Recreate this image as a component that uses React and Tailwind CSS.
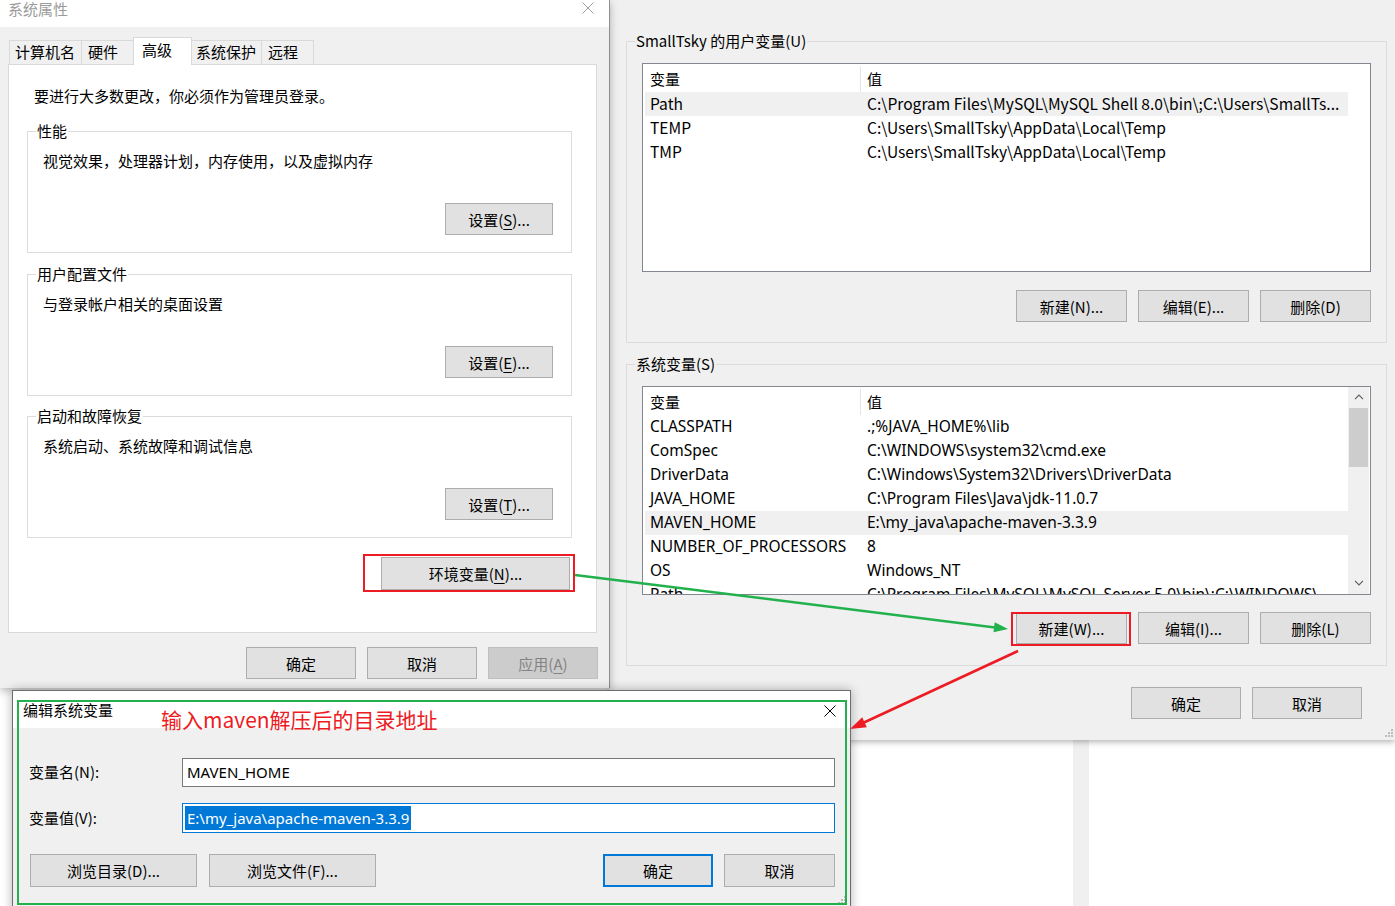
import React from 'react';

const ui = "font-['Noto_Sans_CJK_SC',sans-serif]";
const seg = "font-['Noto_Sans','Noto_Sans_CJK_SC',sans-serif]";

function Key({ children }) {
    return <span className="underline decoration-1 underline-offset-[3px]">{children}</span>;
}

function CloseX({ size = 12, color = '#000', className = '' }) {
    return (
        <svg width={size} height={size} viewBox="0 0 12 12" className={className}>
            <path d="M0.5 0.5L11.5 11.5M11.5 0.5L0.5 11.5" stroke={color} strokeWidth="1" fill="none" />
        </svg>
    );
}

function Chevron({ down = false }) {
    return (
        <svg width="10" height="6" viewBox="0 0 10 6">
            <path d={down ? 'M1 0.8L5 4.8L9 0.8' : 'M1 5.2L5 1.2L9 5.2'} stroke="#606060" strokeWidth="1.2" fill="none" />
        </svg>
    );
}

function Grip({ className = '' }) {
    // resize grip dots in the corner
    const dots = [[6, 0], [3, 3], [6, 3], [0, 6], [3, 6], [6, 6]];
    return (
        <svg width="8" height="8" viewBox="0 0 8 8" className={className}>
            {dots.map(([x, y]) => (
                <rect key={`${x}-${y}`} x={x} y={y} width="2" height="2" fill="#bcbcbc" />
            ))}
        </svg>
    );
}

function Btn({ children, className = '', variant = 'normal' }) {
    const tone =
        variant === 'primary'
            ? 'border-2 border-[#0078d7] bg-[#e1e1e1] text-black'
            : variant === 'disabled'
                ? 'border border-[#bfbfbf] bg-[#cccccc] text-[#838383]'
                : 'border border-[#adadad] bg-[#e1e1e1] text-black';
    return (
        <button type="button" className={`flex shrink-0 items-center justify-center text-[15px] leading-none ${tone} ${className}`}>
            {children}
        </button>
    );
}

function Group({ title, bg = 'bg-white', className = '', children }) {
    return (
        <div className={`flex shrink-0 flex-col border border-[#dcdcdc] ${className}`}>
            <div className={`-mt-[11px] ml-[8px] w-fit px-px leading-[20px] ${bg}`}>{title}</div>
            {children}
        </div>
    );
}

function Scrollbar() {
    return (
        <div className="flex w-[21px] flex-col bg-[#f0f0f0]">
            <div className="flex h-[20px] items-center justify-center">
                <Chevron />
            </div>
            <div className="mx-px mt-px h-[59px] bg-[#cdcdcd]" />
            <div className="flex-1" />
            <div className="flex h-[20px] items-center justify-center pb-[2px]">
                <Chevron down />
            </div>
        </div>
    );
}

function VarList({ rows, selected, scroll = false, rowFont, className = '' }) {
    return (
        <div className={`flex h-[209px] w-[729px] shrink-0 border border-[#828790] bg-white ${className}`}>
            <div className="flex w-[705px] flex-col overflow-hidden pl-[2px] pt-[2px]">
                <div className="flex h-[26px] shrink-0">
                    <div className="flex w-[216px] shrink-0 items-center border-r border-[#e5e5e5] pl-[5px]">变量</div>
                    <div className="flex items-center pl-[6px]">值</div>
                </div>
                {rows.map(([name, value]) => (
                    <div
                        key={name + value}
                        className={`flex h-[24px] shrink-0 items-center whitespace-nowrap ${rowFont} ${name === selected ? 'bg-[#f0f0f0]' : ''}`}
                    >
                        <div className="w-[216px] shrink-0 pl-[5px]">{name}</div>
                        <div className="shrink-0 pl-[6px]">{value}</div>
                    </div>
                ))}
            </div>
            {scroll && <Scrollbar />}
        </div>
    );
}

const userVars = [
    ['Path', 'C:\\Program Files\\MySQL\\MySQL Shell 8.0\\bin\\;C:\\Users\\SmallTs...'],
    ['TEMP', 'C:\\Users\\SmallTsky\\AppData\\Local\\Temp'],
    ['TMP', 'C:\\Users\\SmallTsky\\AppData\\Local\\Temp'],
];

const systemVars = [
    ['CLASSPATH', '.;%JAVA_HOME%\\lib'],
    ['ComSpec', 'C:\\WINDOWS\\system32\\cmd.exe'],
    ['DriverData', 'C:\\Windows\\System32\\Drivers\\DriverData'],
    ['JAVA_HOME', 'C:\\Program Files\\Java\\jdk-11.0.7'],
    ['MAVEN_HOME', 'E:\\my_java\\apache-maven-3.3.9'],
    ['NUMBER_OF_PROCESSORS', '8'],
    ['OS', 'Windows_NT'],
    ['Path', 'C:\\Program Files\\MySQL\\MySQL Server 5.0\\bin\\;C:\\WINDOWS\\'],
];

const tabs = [
    { label: '计算机名', w: 'w-[73px]', pl: 'pl-[5px]' },
    { label: '硬件', w: 'w-[53px]', pl: 'pl-[6px]' },
    { label: '高级', w: 'w-[59px]', pl: 'pl-[8px]', active: true },
    { label: '系统保护', w: 'w-[71px]', pl: 'pl-[4px]' },
    { label: '远程', w: 'w-[53px]', pl: 'pl-[6px]' },
];

function SystemProperties() {
    const sections = [
        { title: '性能', text: '视觉效果，处理器计划，内存使用，以及虚拟内存', key: 'S', mt: 'mt-[25px]' },
        { title: '用户配置文件', text: '与登录帐户相关的桌面设置', key: 'E', mt: 'mt-[21px]' },
        { title: '启动和故障恢复', text: '系统启动、系统故障和调试信息', key: 'T', mt: 'mt-[20px]' },
    ];

    return (
        <div className={`absolute left-0 top-0 z-10 flex h-[688px] w-[610px] flex-col border-r border-[#8f8f8f] bg-[#f0f0f0] text-[15px] text-black shadow-[0_3px_8px_rgba(0,0,0,0.28)] ${ui}`}>
            {/* Title bar */}
            <div className="flex h-[27px] shrink-0 justify-between bg-white pl-[8px] pr-[15px]">
                <span className="leading-[17px] text-[#9b9b9b]">系统属性</span>
                <CloseX size={12} color="#9b9b9b" className="mt-[2px]" />
            </div>

            <div className="flex flex-col px-[8px] pt-[10px]">
                {/* Tabs */}
                <div className="flex h-[27px] shrink-0 items-end pl-px">
                    {tabs.map(t =>
                        t.active ? (
                            <div
                                key={t.label}
                                className={`relative z-10 -mb-px -mr-px flex h-[28px] items-center border border-b-0 border-[#d9d9d9] bg-white pb-[3px] ${t.w} ${t.pl}`}
                            >
                                {t.label}
                            </div>
                        ) : (
                            <div
                                key={t.label}
                                className={`-mr-px flex h-[24px] items-center border border-b-0 border-[#d9d9d9] bg-[#f0f0f0] ${t.w} ${t.pl}`}
                            >
                                {t.label}
                            </div>
                        )
                    )}
                </div>

                {/* Tab panel */}
                <div className="flex h-[569px] w-[589px] shrink-0 flex-col border border-[#d9d9d9] bg-white pt-[21px]">
                    <div className="ml-[25px] leading-[20px]">要进行大多数更改，你必须作为管理员登录。</div>

                    {sections.map(s => (
                        <Group key={s.title} title={s.title} className={`ml-[18px] h-[122px] w-[545px] ${s.mt}`}>
                            <div className="mt-[10px] pl-[15px] leading-[20px]">{s.text}</div>
                            <Btn className="mb-[17px] mr-[18px] mt-auto h-[32px] w-[108px] self-end">
                                设置(<Key>{s.key}</Key>)...
                            </Btn>
                        </Group>
                    ))}

                    <Btn className="mr-[26px] mt-[19px] h-[33px] w-[189px] self-end">
                        环境变量(<Key>N</Key>)...
                    </Btn>
                </div>

                {/* Dialog buttons */}
                <div className="mt-[14px] flex gap-[11px] pl-[238px]">
                    <Btn className="h-[32px] w-[110px]">确定</Btn>
                    <Btn className="h-[32px] w-[110px]">取消</Btn>
                    <Btn variant="disabled" className="h-[32px] w-[110px]">
                        应用(<Key>A</Key>)
                    </Btn>
                </div>
            </div>
        </div>
    );
}

function EnvironmentVariables() {
    return (
        <div className={`absolute left-[609px] top-0 flex h-[740px] w-[786px] flex-col bg-[#f0f0f0] pl-[17px] pt-[41px] text-[15px] text-black shadow-[0_2px_6px_rgba(0,0,0,0.3)] ${ui}`}>
            <Group title="SmallTsky 的用户变量(U)" bg="bg-[#f0f0f0]" className="h-[302px] w-[761px]">
                <VarList className="ml-[15px] mt-[12px]" rows={userVars} selected="Path" rowFont="text-[15.6px]" />
                <div className="mr-[15px] mt-[18px] flex justify-end gap-[11px]">
                    <Btn className="h-[32px] w-[111px]">新建(N)...</Btn>
                    <Btn className="h-[32px] w-[111px]">编辑(E)...</Btn>
                    <Btn className="h-[32px] w-[111px]">删除(D)</Btn>
                </div>
            </Group>

            <Group title="系统变量(S)" bg="bg-[#f0f0f0]" className="mt-[21px] h-[302px] w-[761px]">
                <VarList
                    className="ml-[15px] mt-[12px]"
                    rows={systemVars}
                    selected="MAVEN_HOME"
                    scroll
                    rowFont={`text-[15.5px] ${seg}`}
                />
                <div className="mr-[15px] mt-[17px] flex justify-end gap-[11px]">
                    <Btn className="h-[32px] w-[111px]">新建(W)...</Btn>
                    <Btn className="h-[32px] w-[111px]">编辑(I)...</Btn>
                    <Btn className="h-[32px] w-[111px]">删除(L)</Btn>
                </div>
            </Group>

            <div className="mr-[33px] mt-[21px] flex gap-[11px] self-end">
                <Btn className="h-[32px] w-[110px]">确定</Btn>
                <Btn className="h-[32px] w-[110px]">取消</Btn>
            </div>

            <Grip className="absolute bottom-[3px] right-[2px]" />
        </div>
    );
}

function EditVariableDialog() {
    return (
        <div className={`absolute left-[12px] top-[690px] z-20 flex h-[230px] w-[839px] flex-col border border-[#6d6d6d] bg-[#f0f0f0] text-[15px] text-black shadow-[0_0_10px_rgba(0,0,0,0.3)] ${ui}`}>
            <div className="flex h-[37px] shrink-0 items-start justify-between bg-white pl-[10px] pr-[14px] pt-[9px]">
                <span className="leading-[20px]">编辑系统变量</span>
                <CloseX size={12} className="mt-[5px]" />
            </div>

            <div className="flex flex-col pl-[16px] pr-[14px] pt-[30px]">
                <div className="flex items-center">
                    <span className="w-[153px]">变量名(N):</span>
                    <div className={`flex h-[29px] w-[653px] items-center border border-[#7a7a7a] bg-white pl-[4px] ${seg}`}>
                        MAVEN_HOME
                    </div>
                </div>
                <div className="mt-[16px] flex items-center">
                    <span className="w-[153px]">变量值(V):</span>
                    <div className={`flex h-[30px] w-[653px] items-center border border-[#0078d7] bg-white pl-[2px] ${seg}`}>
                        <span className="bg-[#0078d7] px-[2px] leading-[24px] text-white">E:\my_java\apache-maven-3.3.9</span>
                    </div>
                </div>

                <div className="mt-[21px] flex gap-[12px] pl-px pr-px">
                    <Btn className="h-[33px] w-[167px]">浏览目录(D)...</Btn>
                    <Btn className="h-[33px] w-[167px]">浏览文件(F)...</Btn>
                    <div className="flex-1" />
                    <Btn variant="primary" className="-ml-[2px] h-[33px] w-[110px]">确定</Btn>
                    <Btn className="-ml-px h-[33px] w-[111px]">取消</Btn>
                </div>
            </div>

            <Grip className="absolute right-[4px] top-[205px]" />
        </div>
    );
}

function Annotations() {
    return (
        <>
            {/* red highlight boxes */}
            <div className="absolute left-[363px] top-[554px] z-30 h-[38px] w-[212px] border-2 border-[#ed1c24]" />
            <div className="absolute left-[1011px] top-[612px] z-30 h-[34px] w-[120px] border-2 border-[#ed1c24]" />

            {/* green frame around the edit dialog */}
            <div className="absolute left-[17px] top-[700px] z-30 h-[205px] w-[830px] border-2 border-[#22b14c]" />

            <div className={`absolute left-[161px] top-[705px] z-30 text-[21px] leading-[28px] text-[#ed1c24] ${ui}`}>
                输入maven解压后的目录地址
            </div>

            {/* arrows */}
            <svg className="pointer-events-none absolute left-0 top-0 z-30" width="1395" height="906" viewBox="0 0 1395 906">
                <line x1="575" y1="575" x2="995" y2="627.4" stroke="#22b14c" strokeWidth="2.5" />
                <polygon points="1008,629 994.7,622.3 993.5,632.2" fill="#22b14c" />
                <line x1="1018" y1="651" x2="864" y2="722.5" stroke="#ed1c24" strokeWidth="2.5" />
                <polygon points="850,729 866.8,727.3 862.2,717.3" fill="#ed1c24" />
            </svg>
        </>
    );
}

export default function App() {
    return (
        <div className="relative h-[906px] w-[1395px] overflow-hidden bg-white">
            {/* strip of a window further behind */}
            <div className="absolute left-[1073px] top-[740px] h-[166px] w-[16px] bg-[#f0f0f0]" />

            <EnvironmentVariables />
            <SystemProperties />
            <EditVariableDialog />
            <Annotations />
        </div>
    );
}
